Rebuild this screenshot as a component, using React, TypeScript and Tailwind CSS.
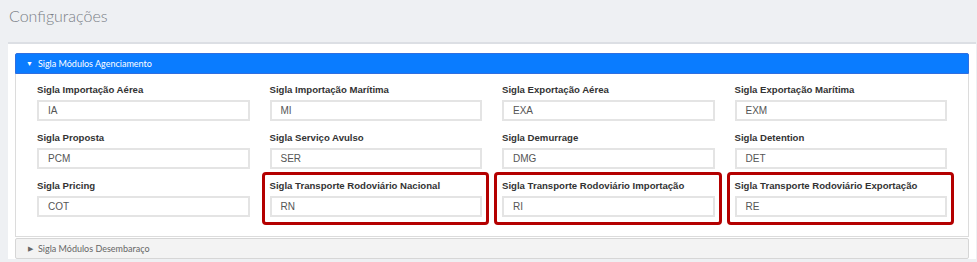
const fields = [
  { label: 'Sigla Importação Aérea', value: 'IA' },
  { label: 'Sigla Importação Marítima', value: 'MI' },
  { label: 'Sigla Exportação Aérea', value: 'EXA' },
  { label: 'Sigla Exportação Marítima', value: 'EXM' },
  { label: 'Sigla Proposta', value: 'PCM' },
  { label: 'Sigla Serviço Avulso', value: 'SER' },
  { label: 'Sigla Demurrage', value: 'DMG' },
  { label: 'Sigla Detention', value: 'DET' },
  { label: 'Sigla Pricing', value: 'COT' },
  { label: 'Sigla Transporte Rodoviário Nacional', value: 'RN', mark: true },
  { label: 'Sigla Transporte Rodoviário Importação', value: 'RI', mark: true },
  { label: 'Sigla Transporte Rodoviário Exportação', value: 'RE', mark: true },
];

const App = () => {
  return (
    <div className="w-[977px] h-[262px] overflow-hidden bg-[#eef0f3] font-['Liberation_Sans',Arial,sans-serif]">
      <h1 className="pl-[9px] pt-[4px] h-[42px] text-[16px] font-light text-[#7a7f86] font-['Lato',sans-serif]">
        Configurações
      </h1>
      <div className="ml-[8px] mr-[1px] bg-white border-t-2 border-[#dcdfe4] px-[7px] pt-[9px]">
        <div className="flex items-center h-[21px] bg-[#0a7cff] border border-[#2f6fe0] rounded-t-[2px] pl-[10px] text-white text-[9px] font-['Lato',sans-serif]">
          <span className="text-[7px] mr-[5px]">▼</span>
          Sigla Módulos Agenciamento
        </div>
        <div className="border border-t-0 border-[#dcdcdc] px-[21px] pt-[9px] pb-[19px] grid grid-cols-4 gap-x-[20px] gap-y-[10px]">
          {fields.map((f) => (
            <div key={f.label} className="relative">
              {f.mark && (
                <div className="absolute -left-[8px] -right-[7px] -top-[7px] -bottom-[8px] border-[3px] border-[#b40000] rounded-[4px]" />
              )}
              <div className="h-[14px] leading-[14px] text-[9.6px] font-bold text-[#333]">{f.label}</div>
              <div className="mt-[3px] h-[21px] border-2 border-[#e4e4e4] flex items-center pl-[9px] text-[10px] text-[#555]">
                {f.value}
              </div>
            </div>
          ))}
        </div>
        <div className="mt-[1px] flex items-center h-[21px] bg-[#f3f3f3] border border-[#d6d6d6] rounded-[2px] pl-[12px] text-[9px] text-[#666] font-['Lato',sans-serif]">
          <span className="text-[7px] mr-[5px]">▶</span>
          Sigla Módulos Desembaraço
        </div>
      </div>
    </div>
  );
};

export default App;
